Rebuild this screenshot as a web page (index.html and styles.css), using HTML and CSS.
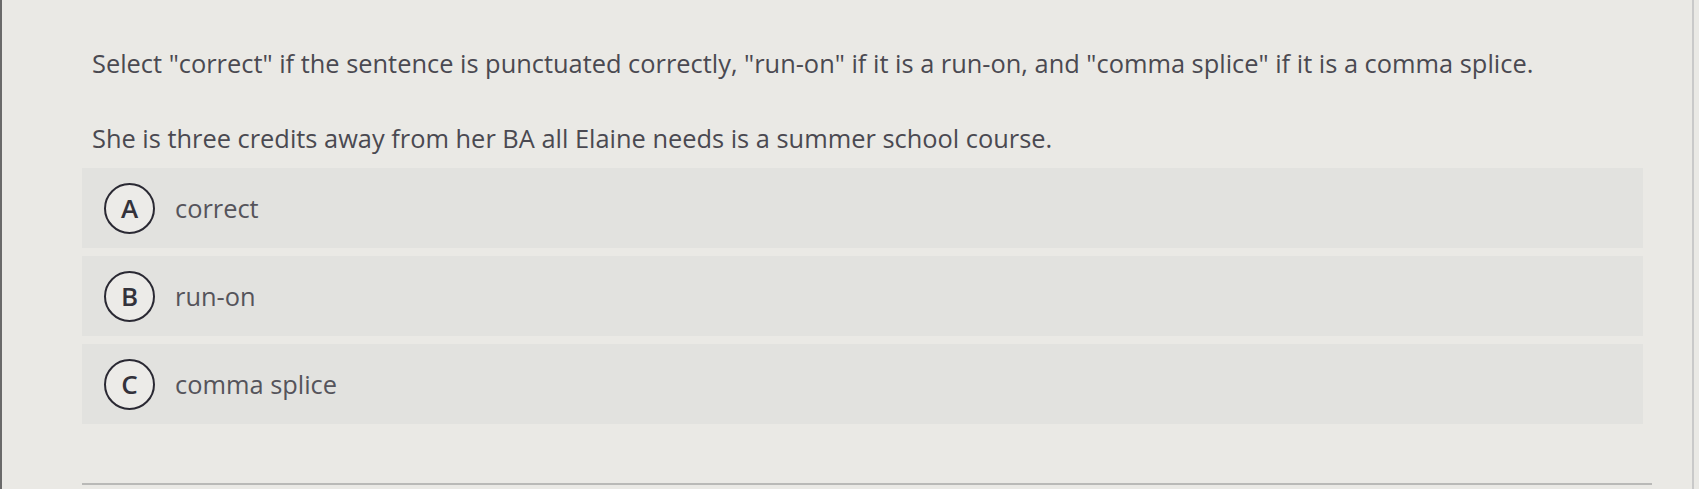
FILE: index.html
```html
<!DOCTYPE html>
<html lang="en">
<head>
<meta charset="utf-8">
<title>Question</title>
<link rel="stylesheet" href="styles.css">
</head>
<body>
<div class="page">
  <div class="question">
    <p class="prompt">Select "correct" if the sentence is punctuated correctly, "run-on" if it is a run-on, and "comma splice" if it is a comma splice.</p>
    <p class="sentence">She is three credits away from her BA all Elaine needs is a summer school course.</p>
  </div>
  <div class="options">
    <div class="option"><span class="badge">A</span><span class="label">correct</span></div>
    <div class="option"><span class="badge">B</span><span class="label">run-on</span></div>
    <div class="option"><span class="badge">C</span><span class="label">comma splice</span></div>
  </div>
  <div class="rule"></div>
</div>
</body>
</html>
```
FILE: styles.css
```css
html, body {
  margin: 0;
  padding: 0;
  height: 100%;
}
body {
  background: #eae9e5;
  font-family: "Open Sans", "DejaVu Sans", sans-serif;
  color: #4a4951;
  overflow: hidden;
}
.page {
  width: 1694px;
  height: 489px;
  border-right: 2px solid #c9c9c9;
  border-left: 2px solid #6a6a6a;
  box-sizing: border-box;
  padding-top: 46px;
}
.question {
  padding-left: 90px;
}
.prompt {
  margin: 0;
  font-size: 25.4px;
  line-height: 34px;
}
.sentence {
  margin: 41px 0 0 0;
  font-size: 25.4px;
  line-height: 34px;
}
.options {
  margin: 13px 0 0 80px;
  width: 1561px;
  display: flex;
  flex-direction: column;
  gap: 8px;
}
.option {
  height: 80px;
  background: #e2e2df;
  display: flex;
  align-items: center;
  padding-left: 22px;
  box-sizing: border-box;
}
.badge {
  width: 51px;
  height: 51px;
  border: 2.5px solid #2a2933;
  border-radius: 50%;
  box-sizing: border-box;
  display: flex;
  align-items: center;
  justify-content: center;
  font-size: 26px;
  font-weight: 600;
  color: #33323b;
  background: #ecebe8;
}
.label {
  margin-left: 20px;
  font-size: 25.4px;
  color: #55545b;
}
.rule {
  margin: 59px 0 0 80px;
  width: 1570px;
  height: 2px;
  background: #b9b9b7;
}
```
